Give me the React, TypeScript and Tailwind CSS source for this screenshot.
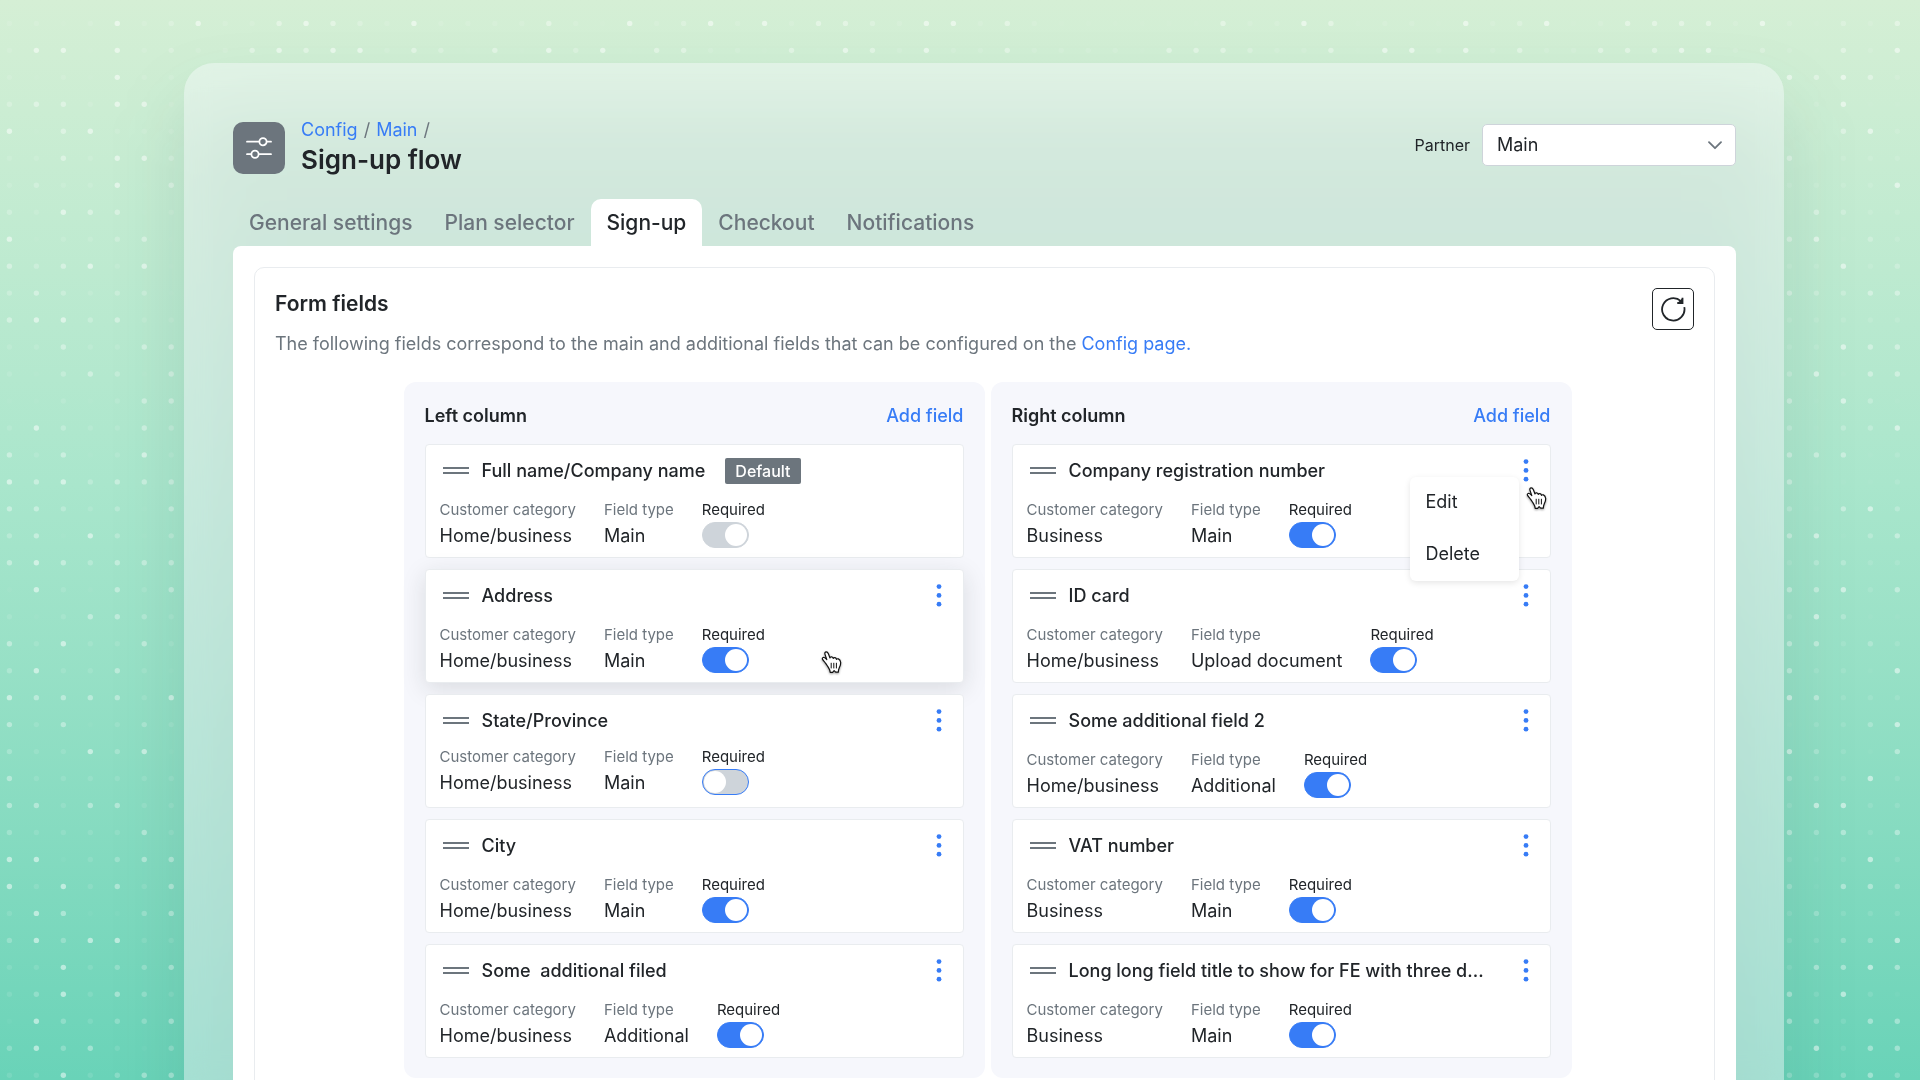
import { useState } from "react";

interface Field {
  title: string;
  category: string;
  type: string;
  required: boolean;
  isDefault?: boolean;
  raised?: boolean;
  focused?: boolean;
  menuOpen?: boolean;
}

const leftFields: Field[] = [
  { title: "Full name/Company name", category: "Home/business", type: "Main", required: true, isDefault: true },
  { title: "Address", category: "Home/business", type: "Main", required: true, raised: true },
  { title: "State/Province", category: "Home/business", type: "Main", required: false, focused: true },
  { title: "City", category: "Home/business", type: "Main", required: true },
  { title: "Some  additional filed", category: "Home/business", type: "Additional", required: true },
];

const rightFields: Field[] = [
  { title: "Company registration number", category: "Business", type: "Main", required: true, menuOpen: true },
  { title: "ID card", category: "Home/business", type: "Upload document", required: true },
  { title: "Some additional field 2", category: "Home/business", type: "Additional", required: true },
  { title: "VAT number", category: "Business", type: "Main", required: true },
  { title: "Long long field title to show for FE with three d...", category: "Business", type: "Main", required: true },
];

const tabs = ["General settings", "Plan selector", "Sign-up", "Checkout", "Notifications"];

// Brightness of every dot, 0 (barely there) to 4
const dotLevels = [0.03, 0.1, 0.22, 0.36, 0.5];
const topDots = [
  "41134321411113104124141332144131000000311430110412401333314",
  "11343441320304240331103043141131111033321130441413113334412",
];
const leftDots = [
  "1101412", "1440412", "1010411", "2331441", "4034111", "1131442", "1211403", "2143301", "4011230", "3234140",
  "2321220", "3442311", "1131133", "1023203", "0010133", "1421132", "3130141", "4342333", "3321203", "2304202",
  "3432333", "0410313", "1013321", "3141131", "2411310", "4333314", "3130121", "2114240", "3111111", "3313311",
  "2111131", "4401233", "4141313", "1430023", "2424411", "1141223", "1241321", "0421223", "2423102", "1141233",
];
const rightDots = [
  "10213", "10314", "43431", "01400", "00341", "30111", "11114", "03211", "34021", "11412",
  "32233", "11111", "11433", "24033", "30420", "20224", "33301", "30001", "20342", "34023",
  "12211", "33413", "14200", "33121", "31104", "43111", "01124", "42103", "21141", "14411",
  "32313", "10141", "20332", "12111", "11224", "13343", "31410", "32133", "14133", "22232",
];

function DotPattern() {
  const groups = [
    { rows: leftDots, offset: 0 },
    { rows: topDots, offset: 7 },
    { rows: rightDots, offset: 66 },
  ];
  return (
    <svg className="absolute inset-0 h-full w-full" viewBox="0 0 1920 1080" preserveAspectRatio="none" aria-hidden="true">
      {groups.map(({ rows, offset }) =>
        rows.map((row, y) =>
          row.split("").map((level, x) => (
            <circle
              key={`${offset}-${y}-${x}`}
              cx={9.4 + (x + offset) * 26.97}
              cy={23.4 + y * 26.97}
              r={2.7}
              fill="#fff"
              opacity={dotLevels[Number(level)]}
            />
          ))
        )
      )}
    </svg>
  );
}

function HandCursor({ className }: { className: string }) {
  return (
    <svg
      className={`pointer-events-none absolute drop-shadow-[0_1px_1px_rgba(0,0,0,0.4)] ${className}`}
      width="22"
      height="24"
      viewBox="0 0 22 24"
      fill="none"
      aria-hidden="true"
    >
      <path
        d="M7.2 16.1C6.6 15.3 5.8 13.9 4.3 11.8C3.5 10.6 1.7 9.2 1.4 8C1 6.8 2.2 6 3.3 6.5C4.3 6.9 5.1 7.9 5.8 8.6L4 3.4C3.5 1.9 4.1 .9 5.2 .8C6.4 .7 6.9 1.6 7.4 2.8L9 7C9.2 6 10 5.6 10.8 5.9C11.6 6.1 12 6.7 12.2 7.4C12.6 6.7 13.3 6.4 14.1 6.7C14.9 6.9 15.3 7.5 15.5 8.3C16 7.8 16.7 7.6 17.4 7.9C18.6 8.4 19.5 9.8 19.7 11.5C19.9 13.2 19.1 15.1 18.2 16.9C17.6 18.1 17.4 19.2 17.3 21.2H14.7L13.1 19.6L11.6 21.3H9.2C9 18.8 8 17.3 7.2 16.1Z"
        fill="#fff"
        stroke="#111"
        strokeWidth="1.2"
        strokeLinejoin="round"
      />
      <path d="M10.2 12.2V17M12.8 12.2V17M15.4 12.2V17" stroke="#111" strokeWidth="1" strokeLinecap="round" />
    </svg>
  );
}

function FieldCard({ field, id }: { field: Field; id: string }) {
  const [required, setRequired] = useState(field.required);

  return (
    <article
      className={`relative rounded border border-[#e9ecef] bg-white px-3.5 pt-3 pb-[7px] ${
        field.raised ? "shadow-[0_6px_24px_rgba(33,37,41,0.13)]" : ""
      }`}
    >
      <div className="flex h-7 items-center">
        <svg className="mr-3 ml-0.5 shrink-0" width="28" height="8" viewBox="0 0 28 8" aria-hidden="true">
          <path d="M1 1H27M1 6H27" stroke="#6c757d" strokeWidth="1.8" />
        </svg>
        <h3 className="text-lg leading-7 font-medium whitespace-pre">{field.title}</h3>
        {field.isDefault ? (
          <span className="ml-5 rounded-xs bg-[#6c757d] px-2.5 text-base leading-[26px] font-medium text-white">
            Default
          </span>
        ) : (
          <button type="button" aria-label={`Actions for ${field.title}`} className="ml-auto px-1.5">
            <svg width="8" height="24" viewBox="0 0 8 24" fill="#377cf6">
              <circle cx="4" cy="2.6" r="2.4" />
              <circle cx="4" cy="11.4" r="2.4" />
              <circle cx="4" cy="20.2" r="2.4" />
            </svg>
          </button>
        )}
      </div>

      <div className={`flex gap-7 ${field.focused ? "pt-2.5 pb-[3px]" : "pt-[13px]"}`}>
        <div>
          <p className="text-[15px] leading-6 text-[#6c757d]">Customer category</p>
          <p className="text-lg leading-7">{field.category}</p>
        </div>
        <div>
          <p className="text-[15px] leading-6 text-[#6c757d]">Field type</p>
          <p className="text-lg leading-7">{field.type}</p>
        </div>
        <div className="flex flex-col">
          <label htmlFor={id} className="text-[15px] leading-6">Required</label>
          <input
            id={id}
            type="checkbox"
            checked={required}
            disabled={field.isDefault}
            onChange={(e) => setRequired(e.target.checked)}
            className={`flex h-[26px] w-[47px] appearance-none items-center rounded-full border bg-[#ced4da] px-px before:block before:size-[22px] before:rounded-full before:bg-white checked:justify-end checked:border-[#377cf6] checked:bg-[#377cf6] disabled:border-[#ced4da] disabled:bg-[#ced4da] ${
              field.focused ? "border-[#377cf6]" : "border-[#ced4da]"
            }`}
          />
        </div>
      </div>

      {field.raised && <HandCursor className="top-[81px] right-[120px]" />}
      {field.menuOpen && (
        <>
          <div className="absolute top-8 right-[31px] z-10 flex w-[109px] flex-col gap-1 rounded-md bg-white pt-px pb-[3px] shadow-[0_2px_6px_rgba(0,0,0,0.1)]">
            <button type="button" className="px-4 py-3 text-left text-lg leading-6">Edit</button>
            <button type="button" className="px-4 py-3 text-left text-lg leading-6">Delete</button>
          </div>
          <HandCursor className="top-[42px] right-0.5 z-10" />
        </>
      )}
    </article>
  );
}

function FieldColumn({ title, fields, side }: { title: string; fields: Field[]; side: string }) {
  return (
    <section className="min-w-0 flex-1 rounded-xl bg-[#f6f7fc] px-[21px] pt-5 pb-5">
      <div className="mb-3.5 flex items-center justify-between text-lg leading-7">
        <h2 className="font-semibold">{title}</h2>
        <button type="button" className="font-medium text-[#377cf6]">Add field</button>
      </div>
      <div className="flex flex-col gap-[11px]">
        {fields.map((field, i) => (
          <FieldCard key={field.title} field={field} id={`${side}-required-${i}`} />
        ))}
      </div>
    </section>
  );
}

export default function App() {
  const [activeTab, setActiveTab] = useState("Sign-up");

  return (
    <div className="relative h-screen overflow-hidden bg-linear-to-b from-[#d5efd5] via-[#a9e6cc] via-45% to-[#69d3b8] pt-[63px] pl-12 font-[Inter,sans-serif] text-[#212529]">
      <DotPattern />

      <div className="relative mx-auto w-full max-w-[1600px]">
        {/* Soft shadow that also shows through the glass */}
        <div className="absolute inset-x-0 top-10 bottom-0 rounded-[30px] bg-[#1d4646]/12 blur-[36px]" />

        <div className="relative rounded-t-[30px] bg-[#fbfdff]/44 pt-[55px] pr-12 pl-[49px] backdrop-blur-md">
          <header className="flex items-start justify-between">
            <div className="flex items-center gap-4">
              <div className="flex size-[52px] items-center justify-center rounded-[10px] bg-[#6c757d]">
                <svg width="26" height="22" viewBox="0 0 26 22" fill="none" stroke="#fff" strokeWidth="1.8" strokeLinecap="round" aria-hidden="true">
                  <path d="M1 4.7H13M21 4.7H25M1 17.2H5M13 17.2H25" />
                  <circle cx="17" cy="4.7" r="3.6" />
                  <circle cx="9" cy="17.2" r="3.6" />
                </svg>
              </div>
              <div>
                <nav className="flex gap-1.5 text-lg leading-6 text-[#6c757d]">
                  <a href="#config" className="text-[#377cf6]">Config</a>
                  <span>/</span>
                  <a href="#main" className="text-[#377cf6]">Main</a>
                  <span>/</span>
                </nav>
                <h1 className="text-[26px] leading-9 font-semibold">Sign-up flow</h1>
              </div>
            </div>

            <div className="flex items-center gap-3 pt-1.5">
              <label htmlFor="partner" className="text-base">Partner</label>
              <div className="relative">
                <select
                  id="partner"
                  className="h-[42px] w-[254px] appearance-none rounded-[5px] border border-[#ced4da] bg-white px-3.5 text-lg"
                >
                  <option>Main</option>
                </select>
                <svg className="pointer-events-none absolute top-[17px] right-3.5" width="14" height="9" viewBox="0 0 14 9" fill="none" aria-hidden="true">
                  <path d="M1 1.2L7 7.2L13 1.2" stroke="#6c757d" strokeWidth="1.8" strokeLinecap="round" strokeLinejoin="round" />
                </svg>
              </div>
            </div>
          </header>

          <div role="tablist" className="mt-[21px] flex">
            {tabs.map((tab) => (
              <button
                key={tab}
                type="button"
                role="tab"
                aria-selected={tab === activeTab}
                onClick={() => setActiveTab(tab)}
                className={`h-[47px] rounded-t-[10px] px-4 text-[21px] font-medium ${
                  tab === activeTab ? "bg-white" : "text-[#6c757d]"
                }`}
              >
                {tab}
              </button>
            ))}
          </div>

          <main className="rounded-t-lg bg-white px-[21px] pt-[21px] pb-12">
            <div className="rounded-[10px] border border-[#e9ecef] px-5 py-5">
              <div className="flex items-start justify-between">
                <div>
                  <h2 className="text-[21px] leading-8 font-semibold">Form fields</h2>
                  <p className="mt-2 text-lg leading-8 text-[#6c757d]">
                    The following fields correspond to the main and additional fields that can be configured on the{" "}
                    <a href="#config-page" className="text-[#377cf6]">Config page.</a>
                  </p>
                </div>
                <button
                  type="button"
                  aria-label="Refresh"
                  className="flex size-[42px] items-center justify-center rounded-[5px] border border-[#212529]"
                >
                  <svg width="26" height="26" viewBox="0 0 26 26" fill="none" stroke="#212529" strokeWidth="1.8" aria-hidden="true">
                    <path d="M24.3 11.2A11.2 11.2 0 1 1 20.9 5.1" />
                    <path d="M22.7 1.8V7.2H17.3Z" fill="#212529" stroke="none" />
                    <path d="M22.5 1.8V7H17.3" />
                  </svg>
                </button>
              </div>

              <div className="mx-auto mt-[22px] flex max-w-[1174px] gap-1.5 pl-1.5">
                <FieldColumn title="Left column" fields={leftFields} side="left" />
                <FieldColumn title="Right column" fields={rightFields} side="right" />
              </div>
            </div>
          </main>
        </div>
      </div>
    </div>
  );
}
